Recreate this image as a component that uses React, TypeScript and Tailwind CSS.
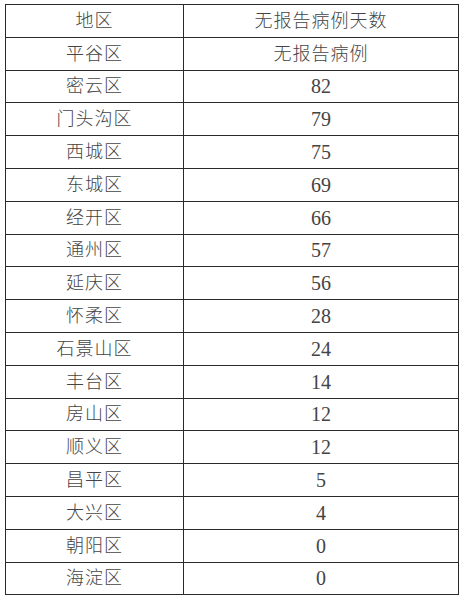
const rows: [string, string][] = [
  ["平谷区", "无报告病例"],
  ["密云区", "82"],
  ["门头沟区", "79"],
  ["西城区", "75"],
  ["东城区", "69"],
  ["经开区", "66"],
  ["通州区", "57"],
  ["延庆区", "56"],
  ["怀柔区", "28"],
  ["石景山区", "24"],
  ["丰台区", "14"],
  ["房山区", "12"],
  ["顺义区", "12"],
  ["昌平区", "5"],
  ["大兴区", "4"],
  ["朝阳区", "0"],
  ["海淀区", "0"],
];

const App = () => {
  return (
    <div className="min-h-screen bg-white pl-[5px] pt-[4px] font-['Liberation_Serif','Noto_Sans_CJK_SC',serif] text-[18px] font-light leading-none text-[#444]">
      <table className="w-[454px] border-collapse">
        <thead>
          <tr className="h-[32.8px]">
            <th className="w-[178px] border border-[#2a2a2a] p-0 text-center font-light tracking-[1px]">地区</th>
            <th className="border border-[#2a2a2a] p-0 text-center font-light tracking-[1px]">无报告病例天数</th>
          </tr>
        </thead>
        <tbody>
          {rows.map(([area, days]) => (
            <tr key={area} className="h-[32.8px]">
              <td className="border border-[#2a2a2a] p-0 text-center tracking-[1px]">{area}</td>
              <td
                className={
                  /\d/.test(days)
                    ? "border border-[#2a2a2a] p-0 text-center text-[20px]"
                    : "border border-[#2a2a2a] p-0 text-center tracking-[1px]"
                }
              >
                {days}
              </td>
            </tr>
          ))}
        </tbody>
      </table>
    </div>
  );
};

export default App;
